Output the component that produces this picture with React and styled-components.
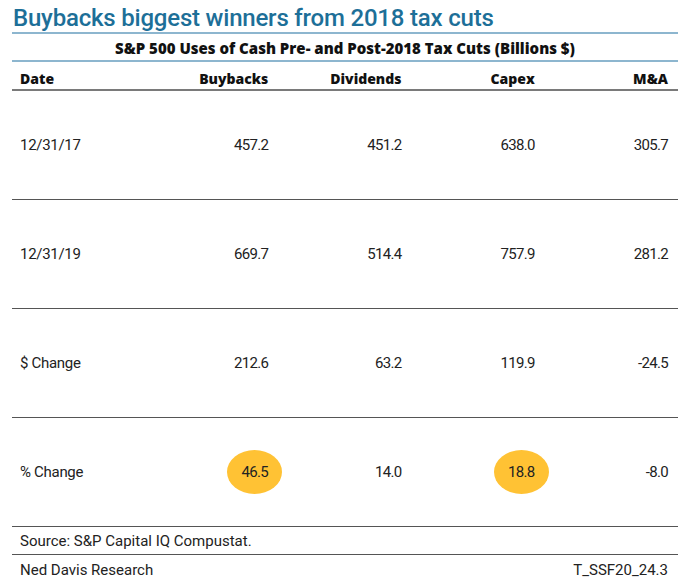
import React from 'react'
import styled, { createGlobalStyle } from 'styled-components'

const GlobalStyle = createGlobalStyle`
    body {
        margin: 0;
        background: #ffffff;
        font-family: "Roboto", "Liberation Sans", sans-serif;
        color: #222;
    }
`

const rows = [
    { date: '12/31/17', values: ['457.2', '451.2', '638.0', '305.7'] },
    { date: '12/31/19', values: ['669.7', '514.4', '757.9', '281.2'] },
    { date: '$ Change', values: ['212.6', '63.2', '119.9', '-24.5'] },
    { date: '% Change', values: ['46.5', '14.0', '18.8', '-8.0'], marked: [0, 2] },
]

const App = () => {
    return (
        <Page>
            <GlobalStyle />
            <Title>Buybacks biggest winners from 2018 tax cuts</Title>
            <Subtitle>S&amp;P 500 Uses of Cash Pre- and Post-2018 Tax Cuts (Billions $)</Subtitle>
            <HeaderRow>
                <HeadCell $left>Date</HeadCell>
                <HeadCell>Buybacks</HeadCell>
                <HeadCell>Dividends</HeadCell>
                <HeadCell>Capex</HeadCell>
                <HeadCell>M&amp;A</HeadCell>
            </HeaderRow>
            {rows.map(row => (
                <DataRow key={row.date}>
                    <Cell $left>{row.date}</Cell>
                    {row.values.map((v, i) => (
                        <Cell key={i}>
                            {row.marked && row.marked.includes(i)
                                ? <Highlight>{v}</Highlight>
                                : v}
                        </Cell>
                    ))}
                </DataRow>
            ))}
            <Source>Source: S&amp;P Capital IQ Compustat.</Source>
            <Footer>
                <span>Ned Davis Research</span>
                <span>T_SSF20_24.3</span>
            </Footer>
        </Page>
    )
}

const Page = styled.div`
    width: 666px;
    margin-left: 12px;
`

const Title = styled.div`
    height: 34px;
    box-sizing: border-box;
    padding: 4px 0 0 1px;
    font-size: 24px;
    font-weight: 500;
    line-height: 28px;
    color: #1d6f98;
    border-bottom: 2px solid #8db6cf;
    white-space: nowrap;
    letter-spacing: -0.2px;
`

const Subtitle = styled.div`
    height: 28px;
    box-sizing: border-box;
    display: flex;
    align-items: center;
    justify-content: center;
    padding-top: 2px;
    font-family: "Open Sans", "Roboto", sans-serif;
    font-size: 15px;
    font-weight: 800;
    color: #111;
    border-bottom: 2px solid #8db6cf;
`

const Grid = styled.div`
    display: grid;
    grid-template-columns: 133px repeat(4, 1fr);
    box-sizing: border-box;
`

const HeaderRow = styled(Grid)`
    height: 29px;
    padding-top: 6px;
    border-bottom: 2px solid #7a7a7a;
    align-items: center;
`

const HeadCell = styled.div`
    font-family: "Open Sans", "Roboto", sans-serif;
    font-size: 14px;
    font-weight: 800;
    color: #111;
    text-align: ${p => (p.$left ? 'left' : 'right')};
    padding: ${p => (p.$left ? '0 0 0 8px' : '0 10px 0 0')};
`

const DataRow = styled(Grid)`
    height: 109px;
    border-bottom: 1px solid #555;
    align-items: center;
`

const Cell = styled.div`
    display: flex;
    justify-content: ${p => (p.$left ? 'flex-start' : 'flex-end')};
    padding: ${p => (p.$left ? '0 0 0 8px' : '0 10px 0 0')};
    font-size: 15px;
    color: #222;
    letter-spacing: ${p => (p.$left ? '-0.3px' : '-0.7px')};
`

const Highlight = styled.span`
    display: flex;
    align-items: center;
    justify-content: center;
    width: 55px;
    height: 44px;
    margin-right: -14px;
    border-radius: 50%;
    background: #ffc234;
`

const Source = styled.div`
    height: 28px;
    box-sizing: border-box;
    display: flex;
    align-items: center;
    padding-left: 8px;
    font-size: 15px;
    color: #222;
    border-bottom: 1px solid #555;
`

const Footer = styled.div`
    height: 29px;
    display: flex;
    align-items: center;
    justify-content: space-between;
    padding: 0 10px 0 8px;
    font-size: 15px;
    color: #222;
`

export default App
